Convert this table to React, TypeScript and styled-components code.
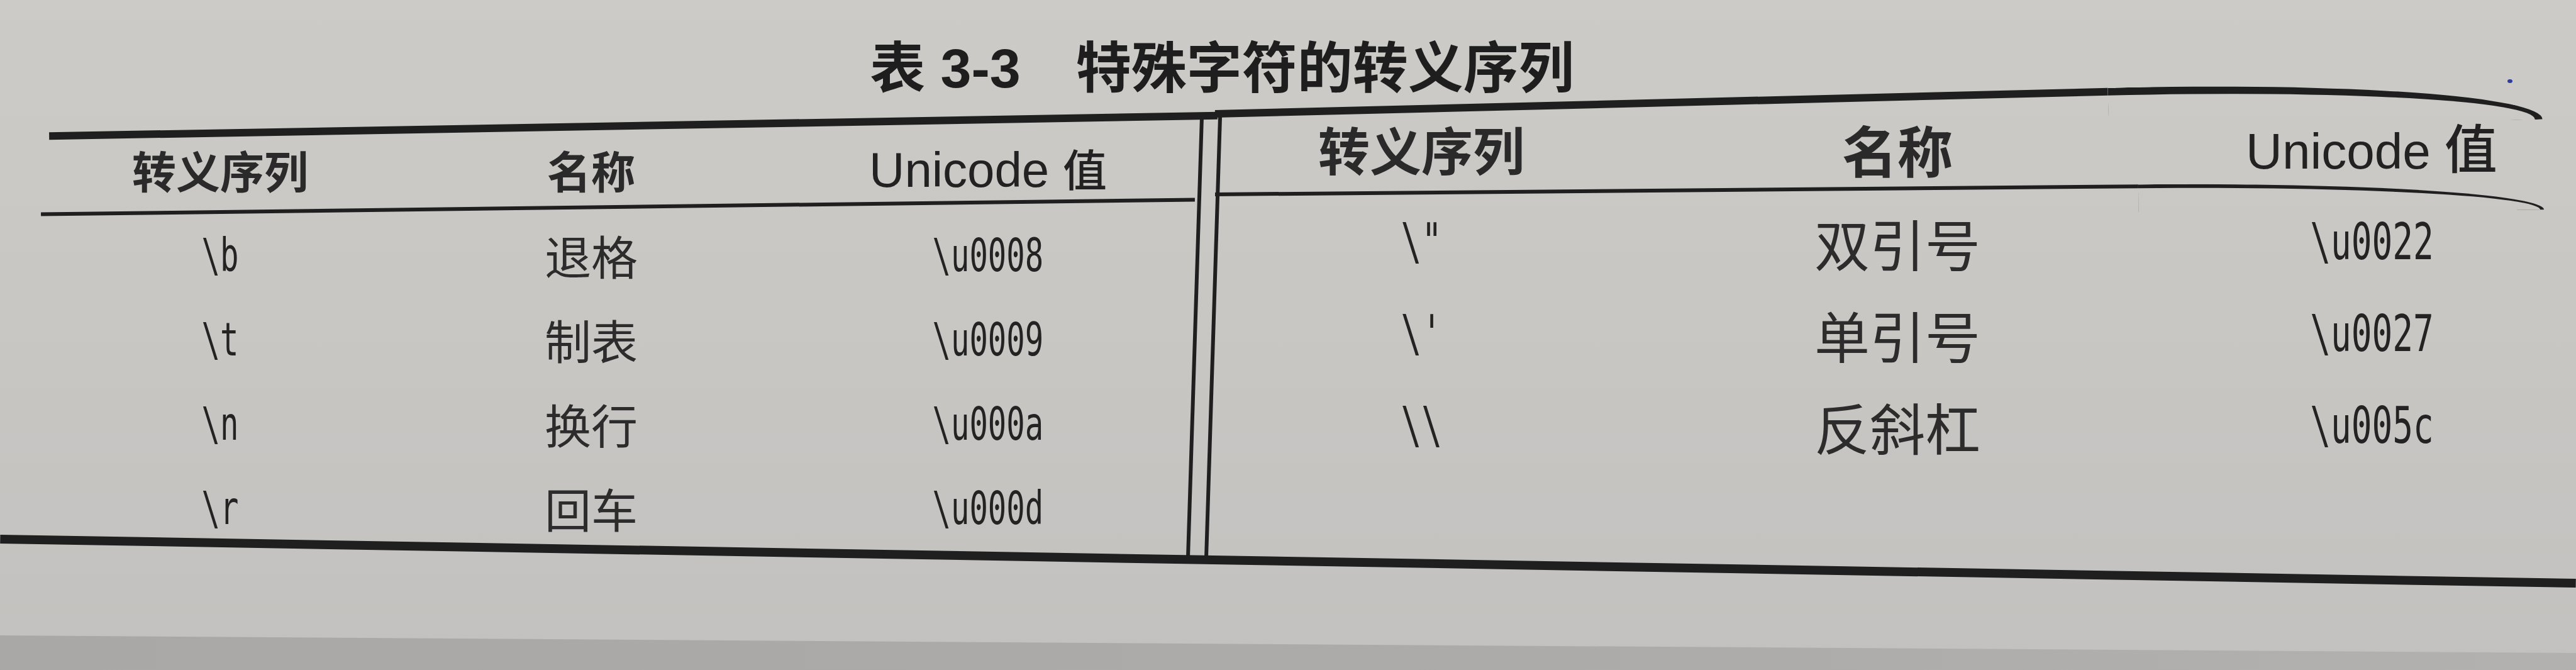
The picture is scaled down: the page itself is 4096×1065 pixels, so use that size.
import React from 'react';
import styled, { createGlobalStyle } from 'styled-components';

const CJK = `"Noto Sans CJK SC", "Noto Sans", sans-serif`;
const LATIN = `"Liberation Sans", "Noto Sans CJK SC", sans-serif`;
const MONO = `"DejaVu Sans Mono", "Liberation Mono", monospace`;
const INK = '#1f1f1f';

const GlobalStyle = createGlobalStyle`
  html, body {
    margin: 0;
    padding: 0;
    background: #c7c5c2;
  }
`;

const Page = styled.div`
  position: relative;
  width: 4096px;
  height: 1065px;
  overflow: hidden;
  display: flex;
  flex-direction: column;
  background: linear-gradient(180deg, #cdcbc8 0%, #c8c6c3 55%, #c3c1bf 100%);
  color: #262626;
`;

const TitleBar = styled.div`
  display: flex;
  justify-content: center;
  height: 88px;
  padding: 65px 210px 0 0;
`;

const Title = styled.h1`
  margin: 0;
  font-family: ${LATIN};
  font-size: 88px;
  line-height: 88px;
  font-weight: 700;
  color: #1e1e1e;
  white-space: pre;
`;

const Table = styled.div`
  display: flex;
  flex-direction: column;
`;

const Halves = styled.div`
  display: flex;
  height: 732px;
`;

const HalfBox = styled.div<{ $ml: number; $w?: number; $pt: number }>`
  display: flex;
  flex-direction: column;
  margin-left: ${p => p.$ml}px;
  padding-top: ${p => p.$pt}px;
  ${p => (p.$w ? `width: ${p.$w}px; flex: none;` : `flex: 1;`)}
`;

const Rule = styled.div<{
  $w: number;
  $t: number;
  $tilt: number;
  $ml?: number;
  $origin?: string;
  $curlW?: number;
  $curlH?: number;
}>`
  position: relative;
  flex: none;
  align-self: flex-start;
  width: ${p => p.$w}px;
  height: ${p => p.$t}px;
  margin-left: ${p => p.$ml ?? 0}px;
  background: ${INK};
  transform: rotate(${p => p.$tilt}deg);
  transform-origin: ${p => p.$origin ?? 'center'};
  ${p =>
    p.$curlW
      ? `
    &::after {
      content: '';
      position: absolute;
      left: 100%;
      top: 0;
      box-sizing: border-box;
      width: ${p.$curlW}px;
      height: ${p.$curlH}px;
      border-top: ${p.$t}px solid ${INK};
      border-right: ${p.$t}px solid ${INK};
      border-top-right-radius: 100% 100%;
    }`
      : ''}
`;

const Row = styled.div<{ $cols: string; $h: number; $pt?: number; $pb?: number }>`
  display: grid;
  grid-template-columns: ${p => p.$cols};
  align-items: center;
  box-sizing: border-box;
  height: ${p => p.$h}px;
  padding-top: ${p => p.$pt ?? 0}px;
  padding-bottom: ${p => p.$pb ?? 0}px;
`;

const Body = styled.div<{ $pt: number }>`
  display: flex;
  flex-direction: column;
  padding-top: ${p => p.$pt}px;
`;

const HeadCell = styled.div<{ $size: number }>`
  text-align: center;
  font-family: ${CJK};
  font-weight: 700;
  font-size: ${p => p.$size}px;
  line-height: 1;
  color: #2a2a2a;
  white-space: nowrap;
`;

const UniHead = styled.div<{ $size: number }>`
  text-align: center;
  font-family: ${LATIN};
  font-weight: 400;
  font-size: ${p => p.$size}px;
  line-height: 1;
  color: #222;
  white-space: nowrap;
`;

const Han = styled.span<{ $size: number }>`
  font-family: ${CJK};
  font-weight: 500;
  font-size: ${p => p.$size}px;
`;

const NameCell = styled.div<{ $size: number }>`
  text-align: center;
  font-family: ${CJK};
  font-weight: 400;
  font-size: ${p => p.$size}px;
  line-height: 1;
  color: #2c2c2c;
  white-space: nowrap;
`;

const CodeCell = styled.div`
  text-align: center;
  line-height: 1;
`;

const Code = styled.span<{ $size: number; $squeeze: number }>`
  display: inline-block;
  font-family: ${MONO};
  font-size: ${p => p.$size}px;
  color: #232323;
  transform: scaleX(${p => p.$squeeze});
  white-space: pre;
`;

const Divider = styled.div`
  flex: none;
  box-sizing: border-box;
  width: 35px;
  margin-top: 28px;
  margin-bottom: -6px;
  display: flex;
  justify-content: space-between;
  transform: rotate(1.8deg);
`;

const DividerLine = styled.div`
  width: 6px;
  background: ${INK};
`;

const Band = styled.div`
  flex: 1;
  margin-top: 111px;
  background: linear-gradient(90deg, #aaa8a6 0%, #adabaa 60%, #b2b1b0 100%);
  clip-path: polygon(0 0, 100% 28px, 100% 100%, 0 100%);
`;

const Speck = styled.div`
  position: absolute;
  left: 3987px;
  top: 126px;
  width: 8px;
  height: 6px;
  border-radius: 50%;
  background: #2f3c9c;
`;

interface SideConfig {
  cols: string;
  headH: number;
  headPt: number;
  headPb: number;
  rowH: number;
  bodyPt: number;
  headSizes: [number, number];
  uniSize: number;
  hanSize: number;
  nameSize: number;
  monoSize: number;
  squeeze: number;
}

const leftRows = [
  ['\\b', '退格', '\\u0008'],
  ['\\t', '制表', '\\u0009'],
  ['\\n', '换行', '\\u000a'],
  ['\\r', '回车', '\\u000d'],
];

const rightRows = [
  ['\\"', '双引号', '\\u0022'],
  ["\\'", '单引号', '\\u0027'],
  ['\\\\', '反斜杠', '\\u005c'],
];

const leftSide: SideConfig = {
  cols: '570px 610px 1fr',
  headH: 120,
  headPt: 8,
  headPb: 0,
  rowH: 134,
  bodyPt: 6,
  headSizes: [70, 70],
  uniSize: 78,
  hanSize: 70,
  nameSize: 74,
  monoSize: 73,
  squeeze: 0.67,
};

const rightSide: SideConfig = {
  cols: '656px 858px 1fr',
  headH: 119,
  headPt: 0,
  headPb: 22,
  rowH: 146,
  bodyPt: 0,
  headSizes: [82, 88],
  uniSize: 80,
  hanSize: 84,
  nameSize: 88,
  monoSize: 80,
  squeeze: 0.68,
};

const Header = ({ side }: { side: SideConfig }) => (
  <Row $cols={side.cols} $h={side.headH} $pt={side.headPt} $pb={side.headPb}>
    <HeadCell $size={side.headSizes[0]}>转义序列</HeadCell>
    <HeadCell $size={side.headSizes[1]}>名称</HeadCell>
    <UniHead $size={side.uniSize}>
      Unicode <Han $size={side.hanSize}>值</Han>
    </UniHead>
  </Row>
);

const Rows = ({ side, rows }: { side: SideConfig; rows: string[][] }) => (
  <Body $pt={side.bodyPt}>
    {rows.map(([seq, name, code]) => (
      <Row key={code} $cols={side.cols} $h={side.rowH}>
        <CodeCell>
          <Code $size={side.monoSize} $squeeze={side.squeeze}>{seq}</Code>
        </CodeCell>
        <NameCell $size={side.nameSize}>{name}</NameCell>
        <CodeCell>
          <Code $size={side.monoSize} $squeeze={side.squeeze}>{code}</Code>
        </CodeCell>
      </Row>
    ))}
  </Body>
);

const App: React.FC = () => {
  return (
    <>
      <GlobalStyle />
      <Page>
        <TitleBar>
          <Title>{'表 3-3\u3000特殊字符的转义序列'}</Title>
        </TitleBar>
        <Table>
          <Halves>
            <HalfBox $ml={65} $w={1832} $pt={41}>
              <Rule $w={1858} $t={12} $tilt={-1.0} $ml={13} />
              <Header side={leftSide} />
              <Rule $w={1835} $t={6} $tilt={-0.72} />
              <Rows side={leftSide} rows={leftRows} />
            </HalfBox>
            <Divider>
              <DividerLine />
              <DividerLine />
            </Divider>
            <HalfBox $ml={0} $pt={22}>
              <Rule
                $w={1420}
                $t={12}
                $tilt={-1.42}
                $origin="left center"
                $curlW={690}
                $curlH={67}
              />
              <Header side={rightSide} />
              <Rule
                $w={1468}
                $t={6}
                $tilt={-0.5}
                $origin="left center"
                $curlW={645}
                $curlH={46}
              />
              <Rows side={rightSide} rows={rightRows} />
            </HalfBox>
          </Halves>
          <Rule $w={4096} $t={14} $tilt={0.98} />
        </Table>
        <Band />
        <Speck />
      </Page>
    </>
  );
};

export default App;
